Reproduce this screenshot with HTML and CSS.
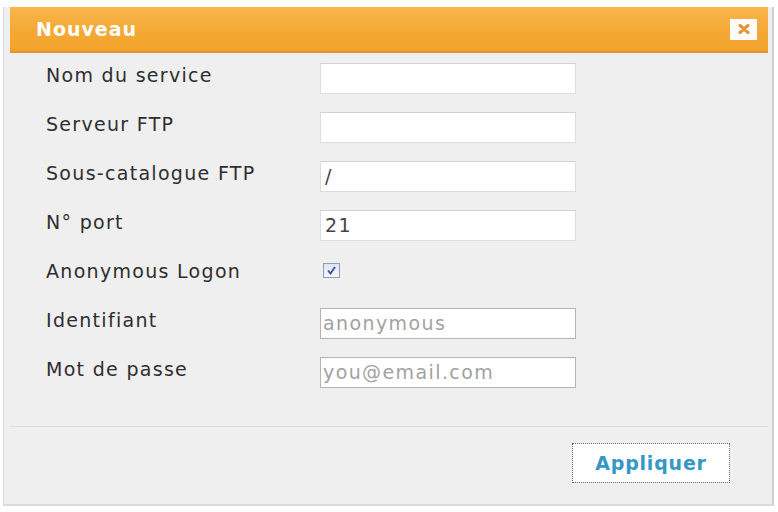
FILE: index.html
```html
<!DOCTYPE html>
<html>
<head>
<meta charset="utf-8">
<link rel="stylesheet" href="styles.css">
</head>
<body>
<div class="dialog">
  <div class="header">
    <span class="title">Nouveau</span>
    <span class="close"><svg width="12" height="10" viewBox="0 0 12 10"><path d="M2 1.5 L10 8.5 M10 1.5 L2 8.5" stroke="#e8932c" stroke-width="3" stroke-linecap="round"/></svg></span>
  </div>
  <div class="form">
    <div class="label">Nom du service</div>
    <div class="field"></div>
    <div class="label">Serveur FTP</div>
    <div class="field"></div>
    <div class="label">Sous-catalogue FTP</div>
    <div class="field">/</div>
    <div class="label">N° port</div>
    <div class="field">21</div>
    <div class="label">Anonymous Logon</div>
    <div class="checkcell"><span class="check"><svg width="11" height="11" viewBox="0 0 11 11"><path d="M2 5.5 L4.5 8.5 L9 2" fill="none" stroke="#3a4fa0" stroke-width="1.8"/></svg></span></div>
    <div class="label">Identifiant</div>
    <div class="field disabled">anonymous</div>
    <div class="label">Mot de passe</div>
    <div class="field disabled">you@email.com</div>
  </div>
  <div class="footer">
    <button class="apply">Appliquer</button>
  </div>
</div>
</body>
</html>
```
FILE: styles.css
```css
html, body {
  margin: 0;
  padding: 0;
  background: #ffffff;
}
body {
  font-family: "DejaVu Sans", Verdana, sans-serif;
  width: 778px;
  height: 512px;
  overflow: hidden;
}
.dialog {
  margin: 7px 0 0 3px;
  width: 771px;
  height: 499px;
  box-sizing: border-box;
  background: #efefef;
  border-left: 1px solid #d6d6d6;
  border-right: 2px solid #cfcfcf;
  border-bottom: 2px solid #dcdcdc;
  padding: 0 4px 0 6px;
  display: flex;
  flex-direction: column;
}
.header {
  height: 46px;
  box-sizing: border-box;
  background: linear-gradient(#f8b64c, #f4a833 60%, #f2a22c);
  border-bottom: 2px solid #e3952b;
  display: flex;
  align-items: center;
  justify-content: space-between;
  padding: 0 11px 0 26px;
}
.title {
  color: #ffffff;
  font-weight: bold;
  font-size: 19px;
  letter-spacing: 1px;
}
.close {
  width: 27px;
  height: 21px;
  background: #fbfbfb;
  display: flex;
  align-items: center;
  justify-content: center;
}
.form {
  display: grid;
  grid-template-columns: 274px 256px;
  grid-auto-rows: 31px;
  row-gap: 18px;
  padding: 10px 0 0 36px;
}
.label {
  font-size: 19px;
  color: #2e2e2e;
  line-height: 24px;
  letter-spacing: 1.3px;
}
.field {
  background: #ffffff;
  border: 1px solid #dddddd;
  border-top-color: #d2d2d2;
  box-sizing: border-box;
  font-size: 19px;
  color: #444444;
  line-height: 29px;
  padding-left: 4px;
  letter-spacing: 1.4px;
  white-space: nowrap;
  overflow: hidden;
}
.field.disabled {
  border: 1px solid #b4b4b4;
  color: #a2a2a2;
  padding-left: 2px;
}
.checkcell {
  padding: 4px 0 0 3px;
}
.check {
  display: flex;
  align-items: center;
  justify-content: center;
  width: 15px;
  height: 13px;
  border: 1px solid #8d9cb8;
  background: linear-gradient(#dfe5f0, #f4f6fa);
}
.footer {
  margin-top: auto;
  height: 78px;
  box-sizing: border-box;
  border-top: 1px solid #dcdcdc;
  display: flex;
  justify-content: flex-end;
  padding: 16px 38px 0 0;
}
.apply {
  width: 158px;
  height: 40px;
  background: #ffffff;
  border: 1px dotted #666666;
  font-family: "DejaVu Sans", Verdana, sans-serif;
  font-weight: bold;
  font-size: 19px;
  letter-spacing: 0.8px;
  color: #3597c6;
  padding: 0;
}
```
